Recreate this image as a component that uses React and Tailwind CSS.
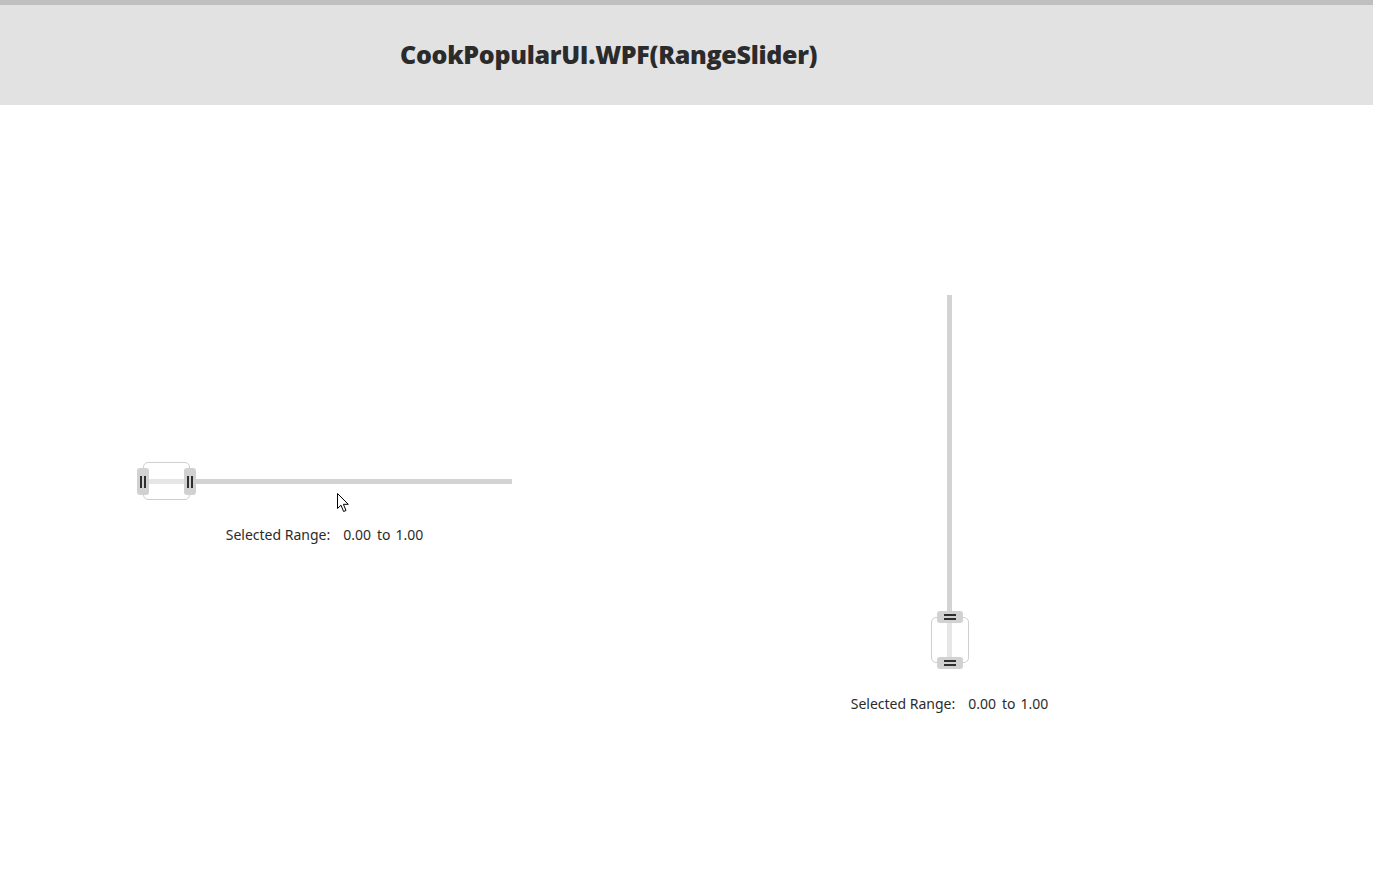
import React from "react";

const GripV = () => (
  <div className="flex gap-[2px]">
    <div className="w-[2px] h-[12px] bg-[#2e2e2e]" />
    <div className="w-[2px] h-[12px] bg-[#2e2e2e]" />
  </div>
);

const GripH = () => (
  <div className="flex flex-col gap-[2px]">
    <div className="w-[12px] h-[2px] bg-[#2e2e2e]" />
    <div className="w-[12px] h-[2px] bg-[#2e2e2e]" />
  </div>
);

const RangeLabel = () => (
  <div
    className="flex justify-center text-[14px] leading-[20px] text-[#2b2b2b] whitespace-nowrap"
    style={{ fontFamily: '"Noto Sans", "Open Sans", sans-serif' }}
  >
    <span>Selected Range:</span>
    <span className="ml-[13px]">0.00</span>
    <span className="ml-[6px]">to</span>
    <span className="ml-[5px]">1.00</span>
  </div>
);

const HorizontalRangeSlider = () => (
  <div className="relative w-[375px] h-[38px]">
    {/* selection box */}
    <div className="absolute left-[6px] top-0 w-[47px] h-[38px] rounded-[5px] border border-[#cfcfcf] bg-white" />
    {/* track */}
    <div className="absolute left-0 top-[17px] w-[375px] h-[5px] bg-[#d3d3d3]" />
    <div className="absolute left-[12px] top-[17px] w-[35px] h-[5px] bg-[#e6e6e6]" />
    {/* thumbs */}
    <div className="absolute left-0 top-[6px] w-[12px] h-[27px] rounded-[3px] bg-[#d1d1d1] flex items-center justify-center">
      <GripV />
    </div>
    <div className="absolute left-[47px] top-[6px] w-[12px] h-[27px] rounded-[3px] bg-[#d1d1d1] flex items-center justify-center">
      <GripV />
    </div>
  </div>
);

const VerticalRangeSlider = () => (
  <div className="relative w-full h-[374px]">
    <div className="absolute left-[81px] top-[322px] w-[38px] h-[46px] rounded-[5px] border border-[#cfcfcf] bg-white" />
    <div className="absolute left-[97px] top-0 w-[5px] h-[374px] bg-[#d3d3d3]" />
    <div className="absolute left-[97px] top-[328px] w-[5px] h-[34px] bg-[#e6e6e6]" />
    <div className="absolute left-[87px] top-[316px] w-[26px] h-[12px] rounded-[3px] bg-[#d1d1d1] flex items-center justify-center">
      <GripH />
    </div>
    <div className="absolute left-[87px] top-[362px] w-[26px] h-[12px] rounded-[3px] bg-[#d1d1d1] flex items-center justify-center">
      <GripH />
    </div>
  </div>
);

export default function App() {
  return (
    <div className="relative w-[1373px] h-[869px] bg-white overflow-hidden">
      <header className="h-[105px] border-t-[5px] border-[#bfbfbf] bg-[#e2e2e2] flex items-center pl-[400px]">
        <h1
          className="text-[25px] leading-[30px] font-extrabold text-[#2b2b2b] tracking-[-0.3px] -mt-[2px]"
          style={{ fontFamily: '"Open Sans", "Noto Sans", sans-serif' }}
        >
          CookPopularUI.WPF(RangeSlider)
        </h1>
      </header>

      <main className="flex items-start">
        <section className="ml-[137px] mt-[357px] w-[375px]">
          <HorizontalRangeSlider />
          <div className="mt-[25px]">
            <RangeLabel />
          </div>
        </section>

        <section className="ml-[338px] mt-[190px] w-[199px]">
          <VerticalRangeSlider />
          <div className="mt-[25px]">
            <RangeLabel />
          </div>
        </section>
      </main>

      {/* mouse pointer */}
      <svg
        className="absolute left-[337px] top-[493px]"
        width="13"
        height="20"
        viewBox="0 0 13 20"
      >
        <path
          d="M0.5 0.5 L0.5 15.5 L4 12.2 L6.6 18.5 L9 17.5 L6.4 11.3 L11.3 11.3 Z"
          fill="#fff"
          stroke="#000"
          strokeWidth="1"
          strokeLinejoin="miter"
        />
      </svg>
    </div>
  );
}
